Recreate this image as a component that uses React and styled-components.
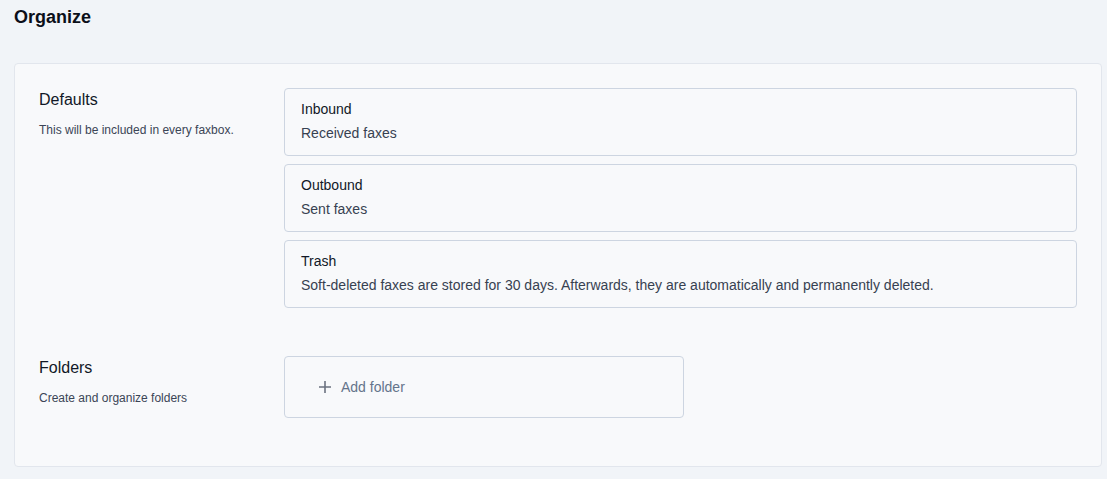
import React from "react";
import styled, { createGlobalStyle } from "styled-components";

const GlobalStyle = createGlobalStyle`
  html, body {
    margin: 0;
    padding: 0;
    background: #f1f4f8;
    font-family: "Liberation Sans", Arial, sans-serif;
  }
`;

export default function App() {
  return (
    <>
      <GlobalStyle />
      <Page>
        <Title>Organize</Title>
        <Card>
          <Section>
            <SectionInfo>
              <SectionTitle>Defaults</SectionTitle>
              <SectionText>This will be included in every faxbox.</SectionText>
            </SectionInfo>
            <ItemList>
              <Item>
                <ItemTitle>Inbound</ItemTitle>
                <ItemText>Received faxes</ItemText>
              </Item>
              <Item>
                <ItemTitle>Outbound</ItemTitle>
                <ItemText>Sent faxes</ItemText>
              </Item>
              <Item>
                <ItemTitle>Trash</ItemTitle>
                <ItemText>
                  Soft-deleted faxes are stored for 30 days. Afterwards, they
                  are automatically and permanently deleted.
                </ItemText>
              </Item>
            </ItemList>
          </Section>
          <Section>
            <SectionInfo>
              <SectionTitle>Folders</SectionTitle>
              <SectionText>Create and organize folders</SectionText>
            </SectionInfo>
            <div>
              <AddButton type="button">
                <svg width="14" height="14" viewBox="0 0 14 14" fill="none">
                  <path
                    d="M7 1v12M1 7h12"
                    stroke="#6b7280"
                    strokeWidth="1.6"
                  />
                </svg>
                Add folder
              </AddButton>
            </div>
          </Section>
        </Card>
      </Page>
    </>
  );
}

const Page = styled.div`
  padding: 6px 5px 13px 14px;
`;

const Title = styled.h1`
  margin: 0 0 35px;
  font-size: 18px;
  line-height: 22px;
  font-weight: 700;
  color: #0b0f19;
`;

const Card = styled.div`
  display: flex;
  flex-direction: column;
  gap: 48px;
  padding: 24px 24px 48px;
  background: #f8f9fb;
  border: 1px solid #e2e6ed;
  border-radius: 4px;
`;

const Section = styled.div`
  display: grid;
  grid-template-columns: 221px 1fr;
  column-gap: 24px;
  align-items: start;
`;

const SectionInfo = styled.div`
  padding-top: 2px;
`;

const SectionTitle = styled.h2`
  margin: 0;
  font-size: 16px;
  line-height: 20px;
  font-weight: 400;
  color: #111827;
`;

const SectionText = styled.p`
  margin: 12px 0 0;
  font-size: 12px;
  line-height: 16px;
  color: #3b4556;
`;

const ItemList = styled.div`
  display: flex;
  flex-direction: column;
  gap: 8px;
`;

const Item = styled.div`
  padding: 10px 16px 12px;
  border: 1px solid #cdd5e1;
  border-radius: 4px;
  background: #f8f9fb;
`;

const ItemTitle = styled.div`
  font-size: 14px;
  line-height: 20px;
  color: #111827;
`;

const ItemText = styled.div`
  margin-top: 4px;
  font-size: 14px;
  line-height: 20px;
  color: #374151;
`;

const AddButton = styled.button`
  display: flex;
  align-items: center;
  gap: 9px;
  width: 400px;
  height: 62px;
  padding: 0 0 0 33px;
  border: 1px solid #cdd5e1;
  border-radius: 4px;
  background: #f8f9fb;
  font-family: inherit;
  font-size: 14px;
  color: #64748b;
  cursor: pointer;
  text-align: left;
`;
